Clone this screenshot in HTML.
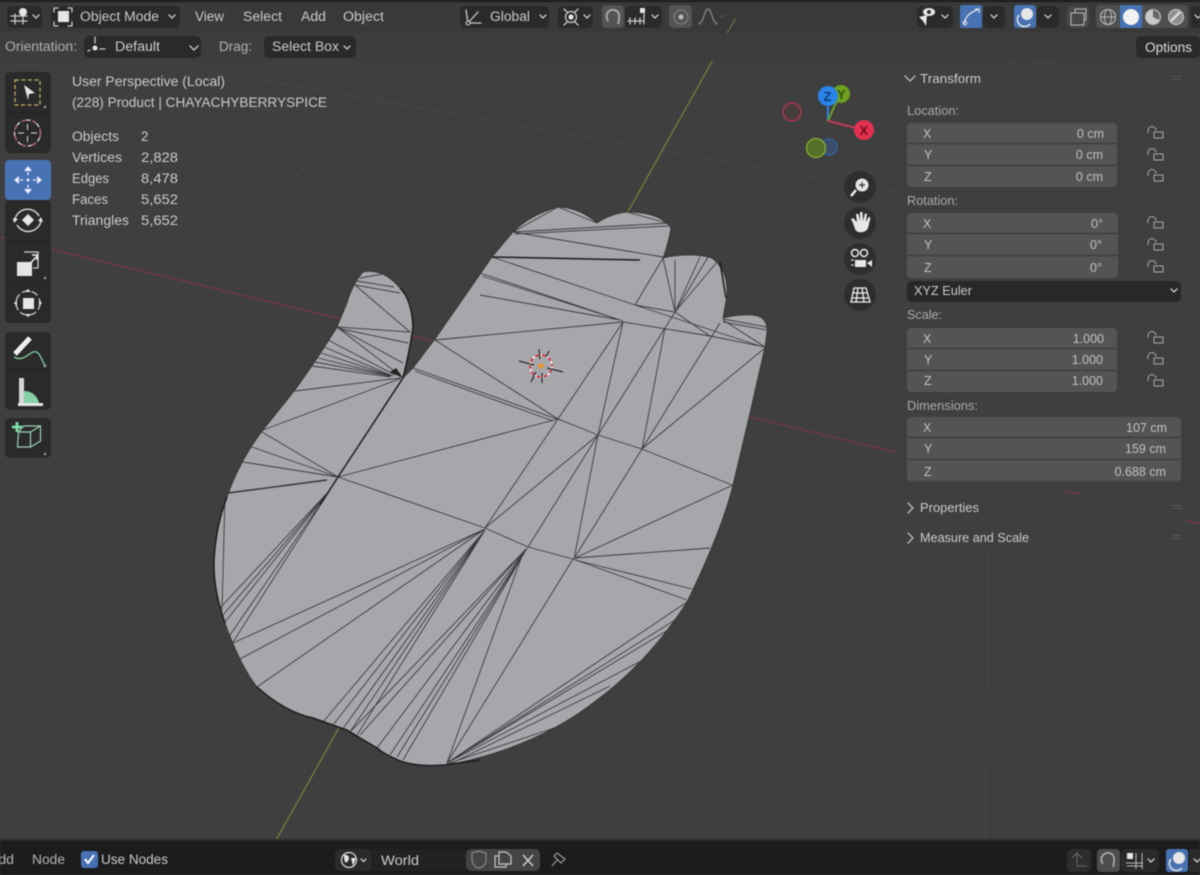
<!DOCTYPE html>
<html lang="en"><head><meta charset="utf-8"><title>Blender viewport</title>
<style>
html,body{margin:0;padding:0;background:#3f3f3f;overflow:hidden}
svg{display:block;filter:blur(.45px)}
text{font-family:"Liberation Sans",sans-serif;font-size:13.5px;fill:#cacaca}
.l{fill:#a9a9a9;font-size:12.5px}
.f{fill:#c2c2c2;font-size:12.5px}
.i{fill:none;stroke:#cacaca;stroke-width:1.3;stroke-linecap:round;stroke-linejoin:round}
.lk{fill:none;stroke:#a8a8a8;stroke-width:1}
.w{fill:#e6e6e6}
</style></head><body>
<svg width="1200" height="875" viewBox="0 0 1200 875" xmlns="http://www.w3.org/2000/svg">
<rect width="1200" height="875" fill="#3f3f3f"/>

<!-- grid -->
<g fill="none" stroke="#474747" stroke-width="1">
<path d="M0 450L410 70M250 78L897 192M833 33L1050 63M1010 33V63M0 668L360 812M989 550L985 840"/>
</g>
<path d="M0 237L895 452" stroke="#7c3743" stroke-width="1.200" fill="none"/>
<path d="M1065 491L1080 494M1186 520L1200 524" stroke="#7c3743" stroke-width="1.200" fill="none"/>
<path d="M742 8L275 842" stroke="#6f8a34" stroke-width="1.200" fill="none"/>

<!-- mesh -->
<path id="hand" fill="#a6a7aa" stroke="#333" stroke-width=".8" stroke-linejoin="round" d="M403 378L413 368L435 339L492 257L513 232Q530 215 558 207Q580 208 597 223Q610 214 627 212Q660 212 671 228Q668 245 663 258Q690 252 712 258Q728 270 727 295L723 318Q745 313 758 316Q768 320 767 332L765 347L750 413L733 485Q722 530 687 602Q650 660 597 700Q540 745 457 763L445 765Q420 767 403 762Q385 755 377 748Q360 738 347 730L313 718Q285 712 257 687Q240 665 225 623Q213 590 214 560Q216 525 227 497Q240 460 263 430L295 390Q320 355 337 327L347 303Q352 285 363 272Q383 268 400 288Q412 300 413 327Q410 350 403 378Z"/>
<g fill="none" stroke="#3a3b40" stroke-width="0.9">
<path d="M338 477L558 419L598 435L642 449L732 485M338 477L485 528L528 547L573 559L687 600M435 340L558 419M413 368L557 419M415 371L553 421M435 340L623 322M480 273L623 321M482 276L620 320M480 295L620 320M492 257L635 305L763 347M623 322L710 336L765 347M623 322L558 419L485 528M623 322L598 435L574 559M598 435L485 528M665 328L598 435L528 547M523 553L447 763M573 559L447 763M665 328L642 449M720 323L642 449M765 348L643 448M642 449L575 557M635 305L663 258L675 312L700 257M675 312L708 257M675 312L717 262M675 260V310M635 305L675 312L710 336M665 328L675 312M723 320L765 347M723 322L767 330M723 319L767 327"/>
<path d="M513 232L670 223M515 234L668 226M513 232L663 257M513 232L558 207M627 212L667 223M558 207L597 223"/>
<path d="M575 558L710 548M575 558L733 485M575 560L692 589M447 763L687 602M447 763L675 620M447 763L668 630M447 763L643 660M447 764L557 727M450 764L610 686"/>
<path d="M485 529L233 643M485 529L238 660M485 529L257 687M485 530L323 722M485 530L333 725M485 530L342 730M485 530L350 732M485 530L357 735M527 548L350 732M527 548L360 735M527 548L377 748M527 548L390 755M527 548L397 757M527 548L403 760"/>
<path d="M330 490L220 608M330 490L223 615M330 490L225 622M330 490L230 635M330 490L233 642M338 477L262 432M338 477L252 447M338 477L243 462M225 497L222 610M263 430L402 378M295 391L400 378"/>
<path d="M337 327L402 377M337 327L410 332M337 328L408 343M337 327L403 363M355 285L410 332M355 285L400 293M357 281L394 287M360 278L383 274M328 340L395 375M324 347L393 376M321 353L392 376M318 358L391 376M315 362L390 376M312 366L390 377"/>
</g>
<g fill="none" stroke="#1c1c1e" stroke-width="1.500">
<path d="M338 477L403 378M320 505L338 477M492 257L640 260M720 262L726 298M225 623Q213 590 214 560Q216 525 227 497M257 687Q285 712 313 718L347 730Q360 738 377 748Q385 755 403 762Q420 767 445 765L480 760M403 378Q410 350 413 327Q412 300 400 288"/>
</g>
<path d="M228 493L327 480" fill="none" stroke="#333" stroke-width="1.400"/>
<path d="M390 372L403 378L396 368Z" fill="#222"/>

<!-- 3D cursor -->
<circle cx="541" cy="366" r="11" fill="none" stroke="#fff" stroke-width="1.500" stroke-dasharray="4 3"/>
<circle cx="541" cy="366" r="11" fill="none" stroke="#d23" stroke-width="1.500" stroke-dasharray="4 3" stroke-dashoffset="3.500"/>
<path d="M519 361L534 365M547 368L563 372M539 349L540 359M542 373L542 383M549 351L546 357M536 372L531 382" stroke="#111" stroke-width="1" fill="none"/>
<circle cx="541" cy="366" r="2.700" fill="#e8952c"/>

<!-- top header -->
<rect width="1200" height="2" fill="#1b1b1b"/>
<rect y="2" width="1200" height="31" fill="#393939"/>
<rect y="33" width="1200" height="28" fill="#3d3d3d"/>
<path d="M736 18L727 33" stroke="#66783a" stroke-width="1.200"/>
<rect x="7" y="6" width="35" height="22" rx="5" fill="#2a2a2a"/>
<rect x="51" y="6" width="129" height="22" rx="5" fill="#2a2a2a"/>
<path class="i" d="M11 21H27M11 16H27M15 14V24M23 14V24"/><circle cx="23" cy="12" r="4" class="w"/><path class="i" d="M33 15l3 3 3-3"/>
<rect x="58" y="11" width="11" height="11" fill="#e6e6e6"/><path class="i" d="M54 12V8h4M68 8h4v4M72 22v4h-4M58 26h-4v-4"/>
<text x="80" y="21" textLength="79" lengthAdjust="spacingAndGlyphs">Object Mode</text><path class="i" d="M169 15l3 3 3-3"/>
<text x="195" y="21" textLength="29" lengthAdjust="spacingAndGlyphs">View</text>
<text x="243" y="21" textLength="39" lengthAdjust="spacingAndGlyphs">Select</text>
<text x="301" y="21" textLength="25" lengthAdjust="spacingAndGlyphs">Add</text>
<text x="343" y="21" textLength="41" lengthAdjust="spacingAndGlyphs">Object</text>

<rect x="460" y="6" width="89" height="22" rx="5" fill="#2a2a2a"/>
<path class="i" d="M467 23H481M468 23L466 10M468 23L478 12"/><circle cx="468" cy="23" r="2" fill="#393939" stroke="#cfcfcf"/>
<text x="490" y="21" textLength="40" lengthAdjust="spacingAndGlyphs">Global</text><path class="i" d="M540 15l3 3 3-3"/>
<rect x="558" y="6" width="35" height="22" rx="5" fill="#2a2a2a"/>
<circle cx="571" cy="17" r="5.500" fill="none" stroke="#cfcfcf" stroke-width="1.200"/><circle cx="571" cy="17" r="2.600" class="w"/><path class="i" d="M564 9L567 12M578 9L575 12M564 25L567 22M578 25L575 22"/><path class="i" d="M584 15l3 3 3-3"/>
<rect x="602" y="5" width="22" height="23" rx="4" fill="#545454"/>
<path d="M608 21C604 13 610 9 614 10C620 11 620 17 618 24" fill="none" stroke="#a8a8a8" stroke-width="2"/>
<rect x="625" y="6" width="37" height="22" rx="5" fill="#2a2a2a"/>
<path class="i" d="M628 21H644M630 18V24M635 18V24M640 18V24M644 14V24"/><rect x="640" y="8" width="5" height="5" class="w"/><path class="i" d="M652 15l3 3 3-3"/>
<rect x="669" y="5" width="23" height="23" rx="4" fill="#545454"/><circle cx="681" cy="17" r="7" fill="none" stroke="#777" stroke-width="1.500"/><circle cx="681" cy="17" r="2.500" fill="#bbb"/>
<path d="M698 24C704 24 704 9 708 9C712 9 712 24 718 24" fill="none" stroke="#8a8a8a" stroke-width="1.200"/><path d="M720 15l2.500 2.500 2.500-2.500" fill="none" stroke="#555" stroke-width="1.200"/>

<rect x="917" y="6" width="36" height="22" rx="5" fill="#2a2a2a"/>
<path d="M919 17L927 15L926 26L923 21Z" class="w"/><ellipse cx="929" cy="12" rx="6" ry="4" fill="#e6e6e6"/><circle cx="929" cy="12" r="2" fill="#333"/><path class="i" d="M942 15l3 3 3-3"/>
<rect x="960" y="5" width="22" height="23" rx="2" fill="#4772b3"/><path d="M964 24C966 14 972 12 979 9" fill="none" stroke="#e6e6e6" stroke-width="1.300"/><circle cx="965" cy="23" r="1.800" fill="none" stroke="#e6e6e6"/><path d="M975 9h4v4" fill="none" stroke="#e6e6e6"/>
<rect x="983" y="6" width="22" height="22" rx="5" fill="#2a2a2a"/><path class="i" d="M991 15l3 3 3-3"/>
<rect x="1014" y="5" width="22" height="23" rx="3" fill="#4772b3"/><circle cx="1027" cy="14" r="6" class="w"/><path d="M1019 15A7 7 0 0 0 1030 24" fill="none" stroke="#e6e6e6" stroke-width="1.500"/>
<rect x="1037" y="6" width="22" height="22" rx="5" fill="#2a2a2a"/><path class="i" d="M1045 15l3 3 3-3"/>
<rect x="1067" y="6" width="22" height="22" rx="4" fill="#484848"/><path d="M1071 13h13v12h-13zM1075 13V9h11v11h-2" fill="none" stroke="#bbb" stroke-width="1"/>
<rect x="1096" y="5" width="92" height="23" rx="4" fill="#4f4f4f"/>
<rect x="1120" y="5" width="22" height="23" fill="#4772b3"/>
<circle cx="1108" cy="17" r="7.500" fill="none" stroke="#bbb" stroke-width="1.100"/><ellipse cx="1108" cy="17" rx="3.500" ry="7.500" fill="none" stroke="#bbb"/><path d="M1100 17h16" stroke="#bbb"/>
<circle cx="1131" cy="17" r="8" fill="#f2f2f2"/>
<circle cx="1153" cy="17" r="7.500" fill="#c9c9c9" stroke="#bbb"/><path d="M1153 10A7 7 0 0 1 1159 20L1153 17Z" fill="#666"/>
<circle cx="1176" cy="17" r="7.500" fill="#8e8e8e" stroke="#ccc"/><path d="M1171 21L1180 12" stroke="#ddd" stroke-width="2.500"/>
<rect x="1191" y="6" width="9" height="22" fill="#2a2a2a"/><path class="i" d="M1195 15l3 3 3-3"/>

<!-- tool settings -->
<text x="5" y="51" textLength="72" lengthAdjust="spacingAndGlyphs" style="fill:#b0b0b0">Orientation:</text>
<rect x="84" y="36" width="117" height="22" rx="5" fill="#2a2a2a"/>
<circle cx="95" cy="48" r="2.500" class="w"/><path class="i" d="M95 43V37M90 50L88 51M100 49H105"/>
<text x="115" y="51" textLength="45" lengthAdjust="spacingAndGlyphs">Default</text><path class="i" d="M190 46l4 4 4-4"/>
<text x="219" y="51" textLength="33" lengthAdjust="spacingAndGlyphs" style="fill:#b0b0b0">Drag:</text>
<rect x="264" y="36" width="92" height="22" rx="5" fill="#2a2a2a"/>
<text x="272" y="51" textLength="67" lengthAdjust="spacingAndGlyphs">Select Box</text><path class="i" d="M344 46l3 3 3-3"/>
<rect x="1136" y="36" width="64" height="22" rx="5" fill="#2a2a2a"/>
<text x="1145" y="52" textLength="47" lengthAdjust="spacingAndGlyphs" style="fill:#ddd">Options</text>

<!-- toolbar -->
<rect x="5" y="72" width="46" height="81" rx="5" fill="#2a2a2a"/><path d="M5 113H51" stroke="#222"/>
<rect x="15" y="80" width="25" height="25" fill="none" stroke="#c2b166" stroke-width="1.300" stroke-dasharray="4 2.500"/>
<path d="M24 85L35 93L29 94L28 100Z" class="w"/><path d="M43 108L46 105V108Z" fill="#aaa"/>
<circle cx="27.500" cy="133" r="13" fill="none" stroke="#ddd" stroke-width="1.300" stroke-dasharray="9 2"/><circle cx="27.500" cy="133" r="13" fill="none" stroke="#b4606c" stroke-width="1.300" stroke-dasharray="5 6"/><path d="M18 133h6M31 133h6M27.500 124v6M27.500 136v6" stroke="#ddd" stroke-width="1"/>
<rect x="5" y="160" width="46" height="40" rx="4" fill="#4772b3"/>
<g fill="#eef"><path d="M28 166l4 5h-8zM28 194l4-5h-8zM14 180l5-4v8zM42 180l-5-4v8z"/><circle cx="28" cy="180" r="1.500"/></g><path d="M20 180h3M33 180h3M28 172v3M28 185v3" stroke="#eef" stroke-width="1.300"/>
<rect x="5" y="200" width="46" height="123" rx="4" fill="#2a2a2a"/>
<path d="M5 241H51M5 283H51" stroke="#222"/>
<path d="M28 214l6 6-6 6-6-6z" class="w"/><path d="M15 219A13 13 0 0 1 39 216M41 221A13 13 0 0 1 17 225" fill="none" stroke="#ddd" stroke-width="1.400"/><path d="M14 223l-1-5 5 1zM41 217l2 5-5-1z" class="w"/>
<rect x="17" y="262" width="15" height="14" class="w"/><path d="M24 252H38V268H33" fill="none" stroke="#ccc" stroke-width="1.300"/><path d="M29 265L36 257M32 255H37V260" fill="none" stroke="#eee" stroke-width="1.500"/>
<path d="M43 279l3-3v3z" fill="#aaa"/>
<rect x="23" y="298" width="11" height="11" class="w"/><circle cx="28" cy="303" r="12" fill="none" stroke="#ccc" stroke-width="1.300" stroke-dasharray="7 3"/><path d="M28 289l3 3h-6zM28 317l3-3h-6zM14 303l3-3v6zM42 303l-3-3v6z" class="w"/>
<rect x="5" y="332" width="46" height="78" rx="5" fill="#2a2a2a"/><path d="M5 370H51" stroke="#222"/>
<path d="M15 354L30 338" stroke="#eee" stroke-width="5"/><path d="M14 357C22 362 28 354 33 352C39 350 41 358 45 366" fill="none" stroke="#7ec8a0" stroke-width="1.400"/><path d="M43 367l3-3v3z" fill="#aaa"/>
<path d="M19 378H24V403H19ZM19 403H42V406H19Z" fill="#d6d6d6"/><path d="M24 391A15 15 0 0 1 39 403H24Z" fill="#86d0a8"/><rect x="18" y="403" width="25" height="3" fill="#e6e6e6"/>
<rect x="5" y="418" width="46" height="40" rx="5" fill="#2a2a2a"/>
<path d="M19 430h12v15h-13zM19 430l5-6h17v15l-10 6M31 430l10-6" fill="none" stroke="#9fd2b6" stroke-width="1.200" transform="translate(-.5 2)"/><path d="M12 427h10M17 422v10" stroke="#7edba8" stroke-width="2.800"/><path d="M43 455l3-3v3z" fill="#aaa"/>

<!-- overlay text -->
<text x="72" y="86" textLength="153" lengthAdjust="spacingAndGlyphs">User Perspective (Local)</text>
<text x="72" y="107" textLength="255" lengthAdjust="spacingAndGlyphs">(228) Product | CHAYACHYBERRYSPICE</text>
<text x="72" y="141" textLength="47" lengthAdjust="spacingAndGlyphs">Objects</text><text x="141" y="141">2</text>
<text x="72" y="162" textLength="50" lengthAdjust="spacingAndGlyphs">Vertices</text><text x="141" y="162" textLength="37" lengthAdjust="spacingAndGlyphs">2,828</text>
<text x="72" y="183" textLength="37" lengthAdjust="spacingAndGlyphs">Edges</text><text x="141" y="183" textLength="37" lengthAdjust="spacingAndGlyphs">8,478</text>
<text x="72" y="204" textLength="36" lengthAdjust="spacingAndGlyphs">Faces</text><text x="141" y="204" textLength="37" lengthAdjust="spacingAndGlyphs">5,652</text>
<text x="72" y="225" textLength="57" lengthAdjust="spacingAndGlyphs">Triangles</text><text x="141" y="225" textLength="37" lengthAdjust="spacingAndGlyphs">5,652</text>

<!-- gizmo -->
<path d="M828 121V100" stroke="#2a84e8" stroke-width="2"/><path d="M828 121L838 98" stroke="#6ea120" stroke-width="2"/><path d="M828 121L860 129" stroke="#c23a55" stroke-width="2"/>
<circle cx="792" cy="112" r="9" fill="#5a3a42" fill-opacity=".4" stroke="#c8324f" stroke-width="1.200"/>
<circle cx="829" cy="147" r="8" fill="#3b4c66" stroke="#2f6fc0" stroke-width="1"/>
<circle cx="816" cy="148" r="9.500" fill="#56702a" stroke="#86b232" stroke-width="1.300"/>
<circle cx="841" cy="94" r="9" fill="#6ea120"/><text x="837" y="99" style="font-size:13px;font-weight:bold;fill:#34500c">Y</text>
<circle cx="828" cy="96" r="10" fill="#2a84e8"/><text x="823.500" y="101" style="font-size:13px;font-weight:bold;fill:#0d3c75">Z</text>
<circle cx="864" cy="130" r="10" fill="#e2304f"/><text x="859.500" y="135" style="font-size:13px;font-weight:bold;fill:#701020">X</text>

<!-- nav -->
<circle cx="860" cy="187" r="16" fill="#2e2e2e"/><circle cx="862" cy="185" r="6.500" class="w"/><path d="M859 185h6M862 182v6" stroke="#333" stroke-width="1.200"/><path d="M856 190L851 196" stroke="#eee" stroke-width="2.500"/>
<circle cx="860" cy="223" r="16" fill="#2e2e2e"/>
<path d="M853 223L851 219L853 218L857 222L856 214H858.500L860 221V212H862.500L863 221L865 213.500H867L866 222L869 216.500L870.500 218L868 228C866 233 857 234 855 229Z" class="w"/>
<circle cx="860" cy="259" r="16" fill="#2e2e2e"/><circle cx="855" cy="253" r="3.500" fill="none" stroke="#eee" stroke-width="1.500"/><circle cx="864" cy="253" r="3.500" fill="none" stroke="#eee" stroke-width="1.500"/><rect x="855" y="260" width="11" height="7" class="w"/><path d="M867 263l5-3v7z" class="w"/><path d="M851 260h3M851 265h3" stroke="#eee"/>
<circle cx="860" cy="295" r="16" fill="#2e2e2e"/>
<path d="M854 288H866L870 302H851ZM858 288L856 302M862 288L864 302M853 293H867M852 298H869" fill="none" stroke="#eee" stroke-width="1.300"/>

<!-- N panel -->
<path class="i" d="M905 76l5 5 5-5" style="stroke:#bbb"/>
<text x="920" y="83" textLength="61" lengthAdjust="spacingAndGlyphs" style="font-size:12.500px">Transform</text>
<path d="M1172 76.500h10M1172 79.500h10M1172 505.500h10M1172 508.500h10M1172 535.500h10M1172 538.500h10" stroke="#6e6e6e" stroke-dasharray="1 1" fill="none"/>
<text class="l" x="907" y="115" textLength="52" lengthAdjust="spacingAndGlyphs">Location:</text>
<text class="l" x="907" y="205" textLength="51" lengthAdjust="spacingAndGlyphs">Rotation:</text>
<text class="l" x="907" y="319" textLength="35" lengthAdjust="spacingAndGlyphs">Scale:</text>
<text class="l" x="907" y="410" textLength="71" lengthAdjust="spacingAndGlyphs">Dimensions:</text>

<g fill="#545454">
<rect x="907" y="123" width="210" height="64" rx="4"/>
<rect x="907" y="213" width="211" height="65" rx="4"/>
<rect x="907" y="328" width="210" height="64" rx="4"/>
<rect x="907" y="417" width="274" height="64" rx="4"/>
</g>
<path d="M907 143.500H1117M907 165.500H1117M907 233.500H1118M907 255.500H1118M907 348.500H1117M907 370.500H1117M907 437.500H1181M907 459.500H1181" stroke="#3b3b3b" stroke-width="1.200"/>
<text class="f" x="923" y="138">X</text><text class="f" x="924" y="159">Y</text><text class="f" x="924" y="181">Z</text>
<text class="f" x="923" y="228">X</text><text class="f" x="924" y="249">Y</text><text class="f" x="924" y="272">Z</text>
<text class="f" x="923" y="343">X</text><text class="f" x="924" y="364">Y</text><text class="f" x="924" y="385">Z</text>
<text class="f" x="923" y="432">X</text><text class="f" x="924" y="453">Y</text><text class="f" x="924" y="476">Z</text>
<g text-anchor="end">
<text class="f" x="1104" y="138">0 cm</text><text class="f" x="1103" y="159">0 cm</text><text class="f" x="1103" y="181">0 cm</text>
<text class="f" x="1103" y="228">0°</text><text class="f" x="1102" y="249">0°</text><text class="f" x="1102" y="272">0°</text>
<text class="f" x="1104" y="343">1.000</text><text class="f" x="1103" y="364">1.000</text><text class="f" x="1103" y="385">1.000</text>
<text class="f" x="1167" y="432">107 cm</text><text class="f" x="1166" y="453">159 cm</text><text class="f" x="1166" y="476">0.688 cm</text>
</g>
<g class="lk">
<path d="M1148 133V130.500A4 4 0 0 1 1156 130.500M1154 132h9v6h-9zM1148 155V152.500A4 4 0 0 1 1156 152.500M1154 154h9v6h-9zM1148 176V173.500A4 4 0 0 1 1156 173.500M1154 175h9v6h-9z"/>
<path d="M1148 223V220.500A4 4 0 0 1 1156 220.500M1154 222h9v6h-9zM1148 245V242.500A4 4 0 0 1 1156 242.500M1154 244h9v6h-9zM1148 267V264.500A4 4 0 0 1 1156 264.500M1154 266h9v6h-9z"/>
<path d="M1148 338V335.500A4 4 0 0 1 1156 335.500M1154 337h9v6h-9zM1148 359V356.500A4 4 0 0 1 1156 356.500M1154 358h9v6h-9zM1148 381V378.500A4 4 0 0 1 1156 378.500M1154 380h9v6h-9z"/>
</g>
<rect x="907" y="281" width="274" height="21" rx="5" fill="#282828"/>
<text x="914" y="295" textLength="58" lengthAdjust="spacingAndGlyphs" style="font-size:12.500px">XYZ Euler</text><path class="i" d="M1171 289l3 3 3-3"/>
<path class="i" d="M908 503l5 5-5 5M908 533l5 5-5 5" style="stroke:#bbb"/>
<text x="920" y="512" textLength="59" lengthAdjust="spacingAndGlyphs" style="font-size:12.500px">Properties</text>
<text x="920" y="542" textLength="109" lengthAdjust="spacingAndGlyphs" style="font-size:12.500px">Measure and Scale</text>

<!-- bottom header -->
<rect y="841" width="1200" height="34" fill="#1c1c1c"/>
<rect y="839" width="1200" height="2" fill="#2b2b2b"/>
<text x="-11" y="864" textLength="25" lengthAdjust="spacingAndGlyphs" style="fill:#b5b5b5">Add</text>
<text x="32" y="864" textLength="33" lengthAdjust="spacingAndGlyphs" style="fill:#b5b5b5">Node</text>
<rect x="81" y="851" width="17" height="17" rx="3" fill="#4772b3"/><path d="M85 859l3 4 6-8" fill="none" stroke="#fff" stroke-width="2"/>
<text x="101" y="864" textLength="67" lengthAdjust="spacingAndGlyphs">Use Nodes</text>
<rect x="335" y="849" width="37" height="22" rx="5" fill="#2a2a2a"/>
<circle cx="349" cy="860" r="7.500" fill="none" stroke="#ddd" stroke-width="1.200"/><path d="M344 855C350 854 350 860 347 862C345 864 344 860 344 855ZM351 858L356 858L353 866Z" class="w"/><path class="i" d="M361 859l2.500 2.500 2.500-2.500"/>
<rect x="373" y="849" width="93" height="22" fill="#222"/>
<text x="381" y="865" textLength="38" lengthAdjust="spacingAndGlyphs">World</text>
<rect x="466" y="849" width="74" height="22" rx="5" fill="#444"/>
<path d="M472 853L479 851L486 853V860C486 865 481 868 479 868C477 868 472 865 472 860Z" fill="none" stroke="#8a8a8a" stroke-width="1.200"/>
<path d="M499 856h-4v11h11v-3M499 852h7l5 4v8h-12z" fill="none" stroke="#c6c6c6" stroke-width="1.200"/>
<path d="M523 855L533 866M533 855L523 866" stroke="#ccc" stroke-width="1.500"/>
<path d="M552 866L557 860M554 856L561 863M557 853L565 859L561 863L554 856Z" fill="none" stroke="#999" stroke-width="1.200"/>

<rect x="1067" y="849" width="24" height="23" rx="5" fill="#2d2d2d"/><path d="M1072 858l5-5 5 5M1077 853V866H1087" fill="none" stroke="#5e5e5e" stroke-width="1.300"/>
<rect x="1097" y="849" width="23" height="23" rx="4" fill="#4d4d4d"/><path d="M1103 864C1098 857 1105 852 1109 853C1115 854 1115 860 1113 867" fill="none" stroke="#a8a8a8" stroke-width="1.800"/>
<rect x="1121" y="849" width="38" height="23" rx="5" fill="#2a2a2a"/><rect x="1127" y="853" width="6" height="6" class="w"/><path d="M1126 863H1143M1127 866H1143M1136 853V869M1142 853V869" stroke="#bbb" stroke-width="1"/><path class="i" d="M1148 859l3 3 3-3"/>
<rect x="1166" y="849" width="22" height="23" rx="3" fill="#4772b3"/><circle cx="1179" cy="858" r="6" class="w"/><path d="M1171 859A7 7 0 0 0 1182 868" fill="none" stroke="#e6e6e6" stroke-width="1.500"/>
<rect x="1189" y="849" width="11" height="23" fill="#2a2a2a"/><path class="i" d="M1194 859l3 3 3-3"/>
</svg>
</body></html>
